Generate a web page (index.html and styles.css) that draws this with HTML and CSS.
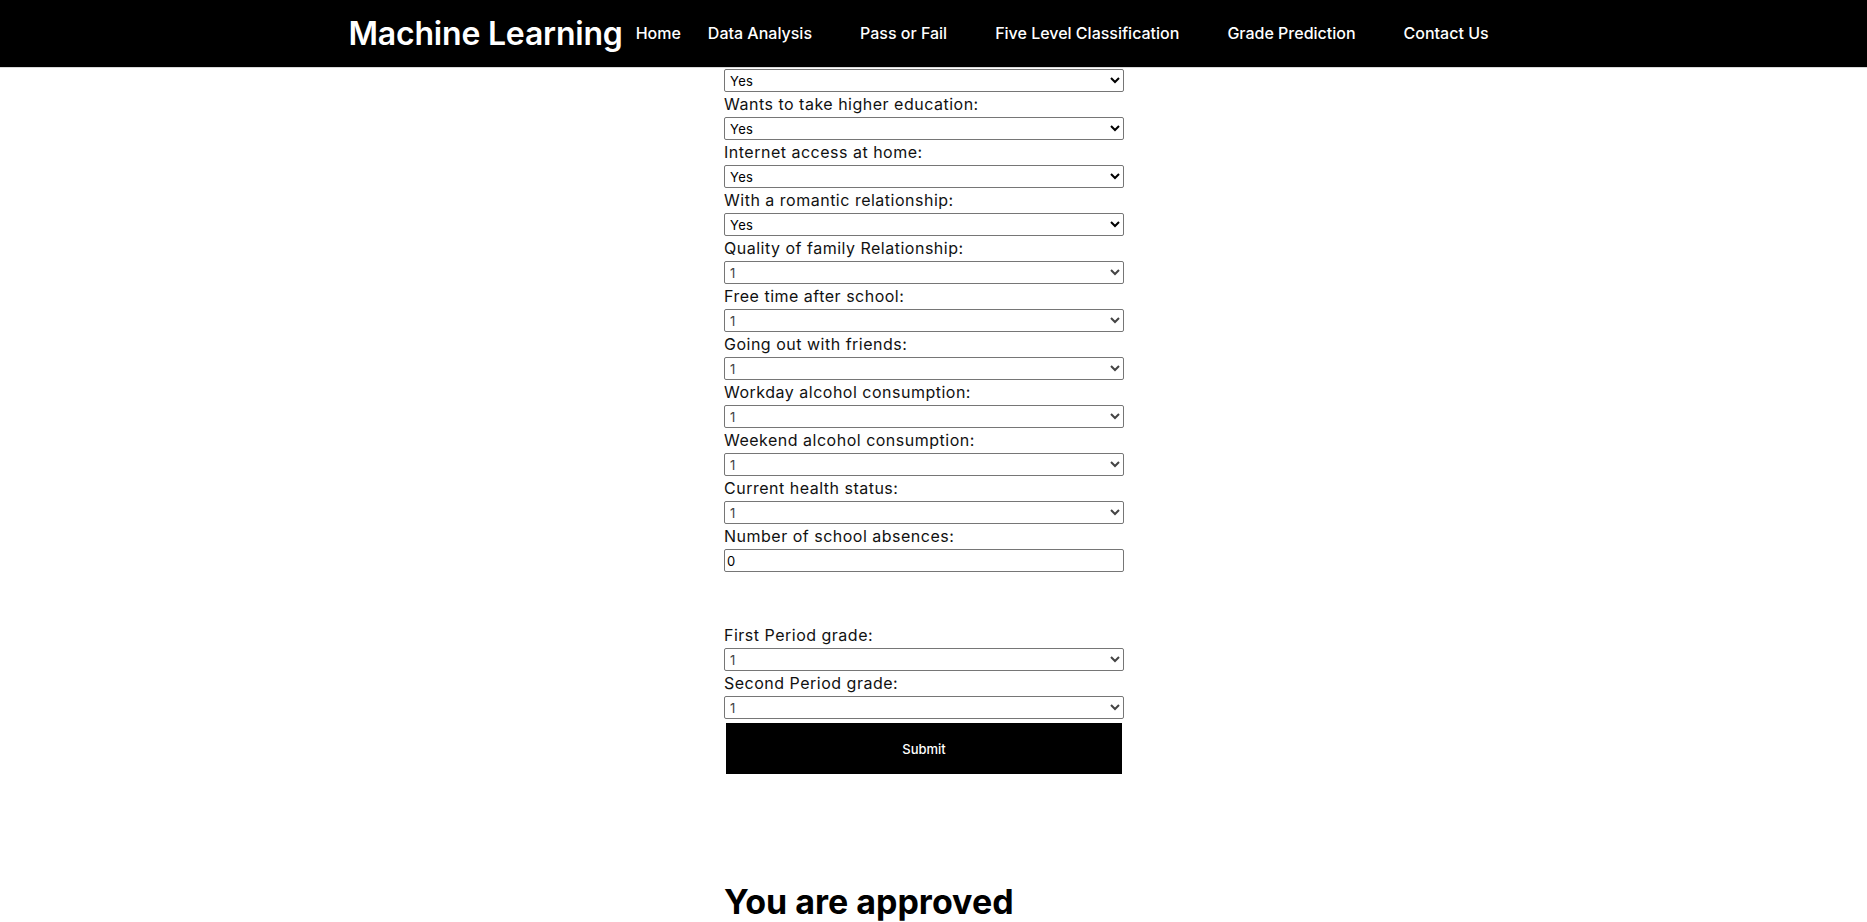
FILE: index.html
```html
<!DOCTYPE html>
<html lang="en">
<head>
<meta charset="utf-8">
<title>Machine Learning</title>
<link rel="stylesheet" href="styles.css">
</head>
<body>
<header class="topbar">
  <div class="container bar-inner">
    <a class="brand" href="#">Machine Learning</a>
    <nav class="nav">
      <a class="nav-link home" href="#">Home</a>
      <a class="nav-link" href="#">Data Analysis</a>
      <a class="nav-link" href="#">Pass or Fail</a>
      <a class="nav-link" href="#">Five Level Classification</a>
      <a class="nav-link" href="#">Grade Prediction</a>
      <a class="nav-link" href="#">Contact Us</a>
    </nav>
  </div>
</header>
<main class="main">
  <form class="form">
    <select class="field"><option>Yes</option><option>No</option></select>
    <label class="lbl">Wants to take higher education:</label>
    <select class="field"><option>Yes</option><option>No</option></select>
    <label class="lbl">Internet access at home:</label>
    <select class="field"><option>Yes</option><option>No</option></select>
    <label class="lbl">With a romantic relationship:</label>
    <select class="field"><option>Yes</option><option>No</option></select>
    <label class="lbl">Quality of family Relationship:</label>
    <select class="field num"><option>1</option><option>2</option><option>3</option><option>4</option><option>5</option></select>
    <label class="lbl">Free time after school:</label>
    <select class="field num"><option>1</option><option>2</option><option>3</option><option>4</option><option>5</option></select>
    <label class="lbl">Going out with friends:</label>
    <select class="field num"><option>1</option><option>2</option><option>3</option><option>4</option><option>5</option></select>
    <label class="lbl">Workday alcohol consumption:</label>
    <select class="field num"><option>1</option><option>2</option><option>3</option><option>4</option><option>5</option></select>
    <label class="lbl">Weekend alcohol consumption:</label>
    <select class="field num"><option>1</option><option>2</option><option>3</option><option>4</option><option>5</option></select>
    <label class="lbl">Current health status:</label>
    <select class="field num"><option>1</option><option>2</option><option>3</option><option>4</option><option>5</option></select>
    <label class="lbl">Number of school absences:</label>
    <input class="field text" type="number" value="0">
    <div class="spacer"></div>
    <label class="lbl">First Period grade:</label>
    <select class="field num"><option>1</option><option>2</option><option>3</option></select>
    <label class="lbl">Second Period grade:</label>
    <select class="field num"><option>1</option><option>2</option><option>3</option></select>
    <button class="submit" type="button">Submit</button>
  </form>
  <h1 class="result">You are approved</h1>
</main>
</body>
</html>
```

FILE: styles.css
```css
* { box-sizing: border-box; }
html, body { margin: 0; padding: 0; }
body {
  font-family: Inter, "Noto Sans", sans-serif;
  color: #000;
  background: #fff;
}
.topbar {
  background: #000;
  height: 68px;
  border-bottom: 1px solid #d8d8d8;
}
.container {
  width: 1170px;
  margin: 0 auto;
}
.bar-inner {
  display: flex;
  align-items: center;
  height: 67px;
}
.brand {
  color: #fff;
  text-decoration: none;
  font-weight: 600;
  font-size: 32px;
  letter-spacing: -0.2px;
  margin-right: 13px;
  padding-bottom: 1px;
}
.nav {
  display: flex;
  align-items: center;
  gap: 48px;
  padding-bottom: 2px;
}
.nav-link {
  color: #fff;
  text-decoration: none;
  font-weight: 500;
  font-size: 16px;
}
.nav-link.home { margin-right: -21px; }
.main {
  display: flex;
  flex-direction: column;
  align-items: center;
}
.form {
  width: 400px;
  margin-right: 19px;
  display: flex;
  flex-direction: column;
  padding-top: 1px;
}
.result {
  width: 400px;
  margin: 107px 19px 0 0;
  font-size: 34px;
  font-weight: 700;
  line-height: 42px;
}
.lbl {
  display: block;
  height: 25px;
  line-height: 25px;
  font-size: 16px;
  letter-spacing: 0.5px;
  color: #111;
}
.field {
  display: block;
  width: 400px;
  height: 23px;
  margin: 0;
  font-family: Inter, "Noto Sans", sans-serif;
  font-size: 13px;
  letter-spacing: 0.3px;
  border: 1px solid #767676;
  border-radius: 2px;
  background: #fff;
  color: #000;
  padding: 0 1px;
}
.field.num { color: #444; }
.field.text { padding: 0 2px; }
.spacer { height: 51px; }
.submit {
  display: block;
  margin: 4px 2px 0 2px;
  width: 396px;
  height: 51px;
  background: #000;
  color: #fff;
  border: none;
  font-family: Inter, "Noto Sans", sans-serif;
  font-weight: 500;
  font-size: 13px;
}
```
